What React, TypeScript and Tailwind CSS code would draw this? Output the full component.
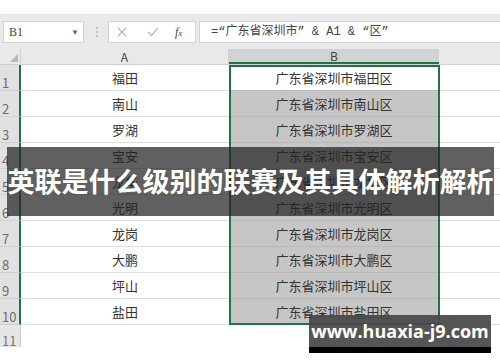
import React from 'react';

const districts = ['福田', '南山', '罗湖', '宝安', '龙华', '光明', '龙岗', '大鹏', '坪山', '盐田'];

const cellFont = { fontFamily: '"Noto Sans CJK SC", "Noto Sans", sans-serif' };

function Toolbar() {
  return (
    <div className="flex h-[35px] items-center bg-[#e9e9e9] pl-[3px]">
      <div className="flex h-[22px] w-[81px] items-center justify-between border border-[#d4d4d4] bg-white pl-[5px] pr-[4px]">
        <span className="text-[12px] text-[#444]" style={{ fontFamily: '"Liberation Serif", "Noto Sans CJK SC", serif' }}>B1</span>
        <span className="text-[8px] text-[#666]">▼</span>
      </div>
      <div className="ml-[11px] flex w-[4px] flex-col items-center gap-[2px]">
        <span className="h-[2px] w-[2px] bg-[#c4c4c4]" />
        <span className="h-[2px] w-[2px] bg-[#c4c4c4]" />
        <span className="h-[2px] w-[2px] bg-[#c4c4c4]" />
      </div>
      <div className="ml-[9px] flex h-[22px] w-[88px] items-center border border-[#d4d4d4] bg-white pl-[8px]">
        <svg width="10" height="10" viewBox="0 0 10 10" className="mr-[20px]">
          <path d="M1 1 L9 9 M9 1 L1 9" stroke="#b8b8b8" strokeWidth="1.2" />
        </svg>
        <svg width="12" height="10" viewBox="0 0 12 10" className="mr-[16px]">
          <path d="M1 5 L4.5 8.5 L11 1" stroke="#b8b8b8" strokeWidth="1.2" fill="none" />
        </svg>
        <span className="text-[12px] italic text-[#444]" style={{ fontFamily: '"Liberation Serif", serif' }}>
          f<span className="text-[9px]">x</span>
        </span>
      </div>
      <div className="ml-[3px] flex h-[22px] flex-1 items-center border border-r-0 border-[#d4d4d4] bg-white pl-[11px]">
        <span className="text-[12px] text-[#444]" style={{ fontFamily: '"Liberation Mono", "Noto Sans CJK SC", monospace' }}>
          =“广东省深圳市” &amp; A1 &amp; “区”
        </span>
      </div>
    </div>
  );
}

function HeaderRow() {
  return (
    <div className="grid h-[16px] grid-cols-[21px_208px_210px_1fr] border-b border-[#d0d0d0] bg-[#e9e9e9] text-[12px] text-[#444]" style={cellFont}>
      <div className="relative border-r border-[#d0d0d0]">
        <span className="absolute bottom-[2px] right-[2px] h-0 w-0 border-b-[8px] border-l-[8px] border-b-[#b9b9b9] border-l-transparent" />
      </div>
      <div className="flex items-center justify-center border-r border-[#d0d0d0] leading-none">A</div>
      <div className="flex items-center justify-center border-b-2 border-[#217346] bg-[#d2d2d2] leading-none">B</div>
      <div />
    </div>
  );
}

function DataRow({ index, name }: { index: number; name: string }) {
  const selected = index > 1;
  return (
    <div className="grid h-[26px] grid-cols-[21px_208px_210px_1fr] text-[13px] text-[#333]" style={cellFont}>
      <div className="flex items-end border-r-2 border-b border-r-[#217346] border-b-[#d0d0d0] bg-[#e1e1e1] pb-[1px] pl-[2px] text-[13px] leading-none text-[#6d6d6d]">
        {index}
      </div>
      <div className="flex items-center justify-center border-b border-[#dedede] bg-white">{name}</div>
      <div className={`flex items-center justify-center border-b border-[#b8b8b8] ${selected ? 'bg-[#c6c6c6]' : 'bg-white'}`}>
        广东省深圳市{name}区
      </div>
      <div className="border-b border-[#e2e2e2] bg-white" />
    </div>
  );
}

export default function App() {
  return (
    <div className="relative h-[362px] w-[500px] overflow-hidden bg-white">
      <div className="h-[14px] bg-white" />
      <Toolbar />
      <HeaderRow />
      <div className="relative">
        {districts.map((d, i) => (
          <DataRow key={d} index={i + 1} name={d} />
        ))}
        <div className="pointer-events-none absolute left-[229px] top-0 h-[260px] w-[211px] border-2 border-[#217346]" />
        <div className="absolute left-[436px] top-[256px] h-[6px] w-[6px] border border-white bg-[#217346]" />
        <div className="absolute left-[443px] top-[264px] h-[10px] w-[14px] border border-[#9ab] bg-[#dde6f2]" />
      </div>
      <div className="grid h-[22px] grid-cols-[21px_1fr]" style={cellFont}>
        <div className="flex items-end border-r border-[#d0d0d0] bg-[#e6e6e6] pl-[2px] text-[13px] leading-none text-[#777]">11</div>
        <div className="bg-white" />
      </div>

      <div
        className="absolute left-[7px] top-[147px] flex h-[69px] w-[487px] items-center justify-center bg-[rgba(35,35,35,0.72)] text-[27px] font-bold tracking-[0px] whitespace-nowrap text-white"
        style={{ fontFamily: '"Noto Sans CJK SC", "Noto Sans", sans-serif' }}
      >
        英联是什么级别的联赛及其具体解析解析
      </div>

      <div className="absolute left-[309px] top-[315px] flex w-[182px] flex-col">
        <div
          className="flex h-[32px] items-center justify-center bg-[rgba(70,70,70,0.92)] text-[18px] font-bold text-white"
          style={{ fontFamily: '"Open Sans", "Liberation Sans", sans-serif' }}
        >
          www.huaxia-j9.com
        </div>
        <div className="h-[6px] bg-black" />
      </div>
    </div>
  );
}
